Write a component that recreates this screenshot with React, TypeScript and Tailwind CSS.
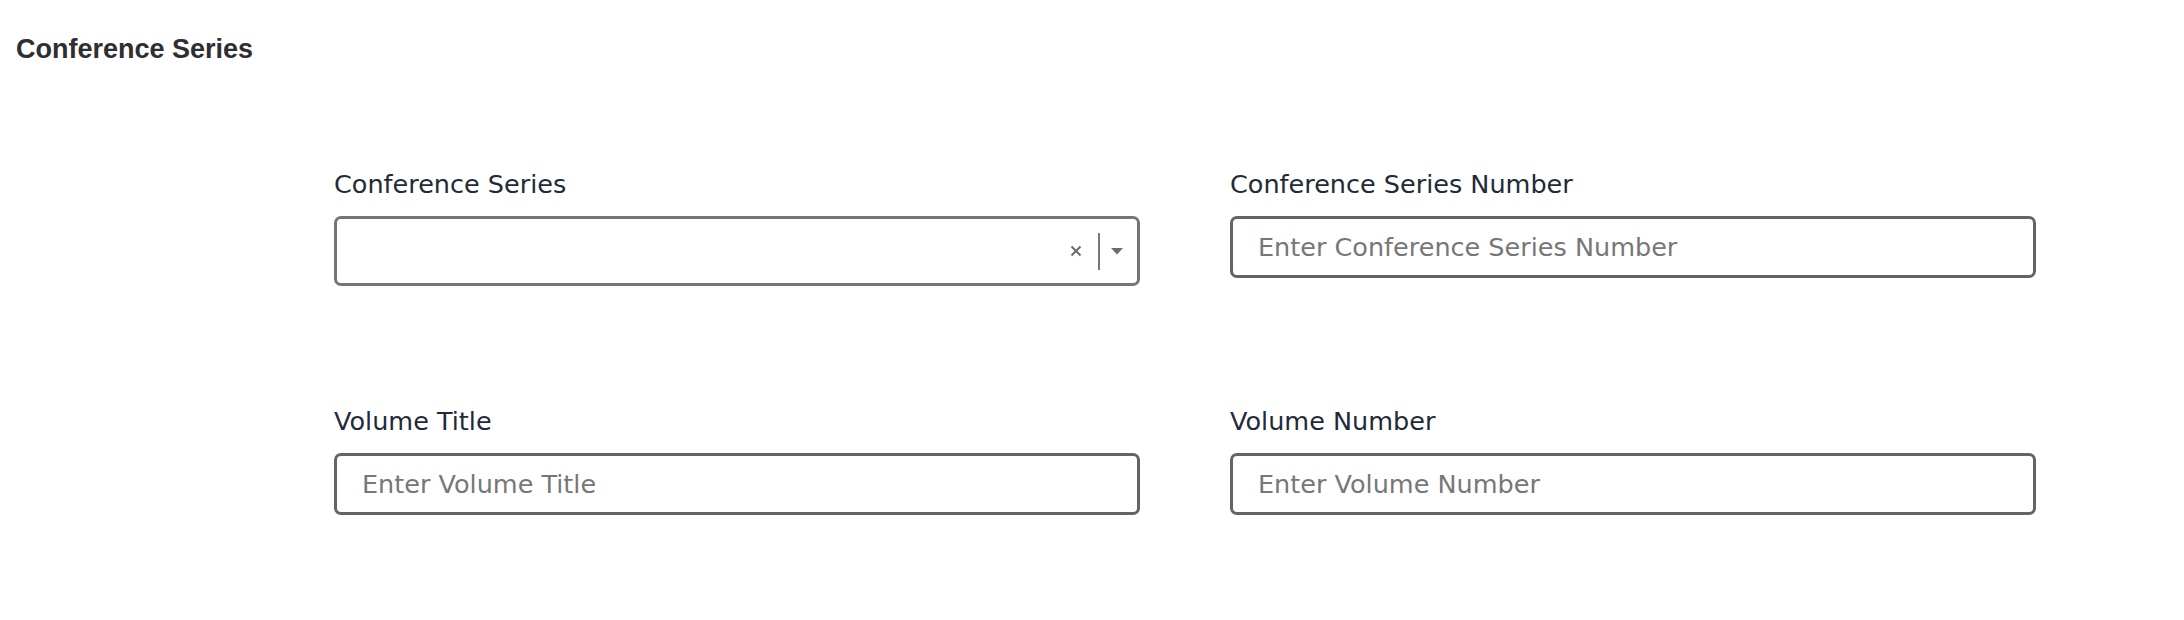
const labelCls =
  "block text-[25.5px] leading-[30px] text-[#222a3a] mb-[17px] font-['DejaVu_Sans',sans-serif]"

const inputCls =
  "block w-full h-[62px] rounded-[7px] border-[3px] border-[#646464] bg-white px-[25px] text-[25.5px] text-[#333] placeholder:text-[#777] outline-none font-['DejaVu_Sans',sans-serif]"

const Field = ({ label, placeholder }: { label: string; placeholder: string }) => (
  <div>
    <label className={labelCls}>{label}</label>
    <input className={inputCls} placeholder={placeholder} />
  </div>
)

const SeriesSelect = () => (
  <div>
    <label className={labelCls}>Conference Series</label>
    <div className="flex h-[70px] items-center rounded-[7px] border-[3px] border-[#757575] bg-white">
      <div className="flex-1" />
      <svg width="12" height="12" viewBox="0 0 12 12" className="mr-[16px]">
        <path d="M1.5 1.5 L10.5 10.5 M10.5 1.5 L1.5 10.5" stroke="#6b6b6b" strokeWidth="2" />
      </svg>
      <div className="h-[37px] w-[2px] bg-[#777]" />
      <svg width="12" height="7" viewBox="0 0 12 7" className="ml-[11px] mr-[14px]">
        <polygon points="0,0 12,0 6,6.5" fill="#6b6b6b" />
      </svg>
    </div>
  </div>
)

export default function App() {
  return (
    <div className="min-h-[620px] w-[2184px] bg-white">
      <h2 className="pl-[16px] pt-[33px] text-[27px] leading-[32px] font-bold text-[#2e2e33] font-['Liberation_Sans',sans-serif]">
        Conference Series
      </h2>
      <div className="ml-[334px] mt-[104px] grid w-[1702px] grid-cols-2 items-start gap-x-[90px] gap-y-[120px]">
        <SeriesSelect />
        <Field label="Conference Series Number" placeholder="Enter Conference Series Number" />
        <Field label="Volume Title" placeholder="Enter Volume Title" />
        <Field label="Volume Number" placeholder="Enter Volume Number" />
      </div>
    </div>
  )
}
